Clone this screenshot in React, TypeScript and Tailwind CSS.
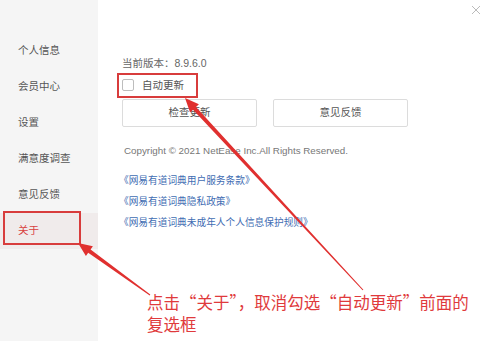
import React from "react";

const navItems = ["个人信息", "会员中心", "设置", "满意度调查", "意见反馈", "关于"];

const links = [
  "《网易有道词典用户服务条款》",
  "《网易有道词典隐私政策》",
  "《网易有道词典未成年人个人信息保护规则》",
];

const cjk = "font-['Liberation_Sans','Noto_Sans_CJK_SC',sans-serif]";

export default function App() {
  return (
    <div
      className={`relative flex h-[341px] w-[481px] overflow-hidden bg-white ${cjk}`}
    >
      {/* sidebar */}
      <aside className="flex w-[98px] shrink-0 flex-col bg-[#f5f5f5] pt-[33px]">
        {navItems.map((item) => {
          const active = item === "关于";
          return (
            <div
              key={item}
              className={`flex h-[36px] items-center pl-[18px] text-[10.5px] ${
                active ? "bg-[#f0ebeb] text-[#d8413f]" : "text-[#555]"
              }`}
            >
              {item}
            </div>
          );
        })}
      </aside>

      {/* content */}
      <main className="flex flex-1 flex-col pl-[24px] pt-[56px]">
        <div className="h-[14px] text-[10.5px] leading-[14px] text-[#666]">
          当前版本：8.9.6.0
        </div>
        <label className="mt-[8px] flex h-[14px] items-center">
          <span className="h-[12px] w-[12px] rounded-[2px] border border-[#bdbdbd] bg-white" />
          <span className="ml-[8px] text-[10.5px] leading-[14px] text-[#555]">
            自动更新
          </span>
        </label>
        <div className="mt-[7px] flex gap-[16px]">
          <button className="h-[28px] w-[135px] rounded-[2px] border border-[#dcdcdc] bg-white text-[10.5px] text-[#555]">
            检查更新
          </button>
          <button className="h-[28px] w-[135px] rounded-[2px] border border-[#dcdcdc] bg-white text-[10.5px] text-[#555]">
            意见反馈
          </button>
        </div>
        <p className="mt-[17px] h-[14px] pl-[2px] text-[9.8px] leading-[14px] text-[#777]">
          Copyright © 2021 NetEase Inc.All Rights Reserved.
        </p>
        <div className="mt-[16px] flex flex-col gap-[7px]">
          {links.map((link) => (
            <a
              key={link}
              className="-ml-[3px] h-[14px] text-[9.7px] leading-[14px] text-[#3f6db3]"
            >
              {link}
            </a>
          ))}
        </div>
      </main>

      {/* close */}
      <svg
        className="absolute right-0 top-[5px]"
        width="10"
        height="10"
        viewBox="0 0 10 10"
      >
        <path d="M1 1 L9 9 M9 1 L1 9" stroke="#bbb" strokeWidth="1" fill="none" />
      </svg>

      {/* annotation boxes */}
      <div className="absolute left-[117px] top-[73px] h-[25px] w-[81px] border-2 border-[#d83c3c]" />
      <div className="absolute left-[3px] top-[211px] h-[34px] w-[78px] border-2 border-[#d83c3c]" />

      {/* annotation arrows */}
      <svg
        className="pointer-events-none absolute left-0 top-0"
        width="481"
        height="341"
        viewBox="0 0 481 341"
      >
        <polygon
          fill="#e0302f"
          points="185,98 198.9,104.2 196,106.9 363.4,289.7 362.6,290.3 193,109.7 190.1,112.4"
        />
        <polygon
          fill="#e0302f"
          points="78,243 92.9,246.3 90.6,249.6 150.3,294.6 149.7,295.4 88.2,252.8 85.9,256.1"
        />
      </svg>

      {/* annotation text */}
      <div className="absolute left-[147px] top-[291px] font-['Noto_Sans_CJK_SC',sans-serif] text-[16.5px] leading-[22px] text-[#e03a3c]">
        <div>点击“关于”，取消勾选“自动更新”前面的</div>
        <div>复选框</div>
      </div>
    </div>
  );
}
